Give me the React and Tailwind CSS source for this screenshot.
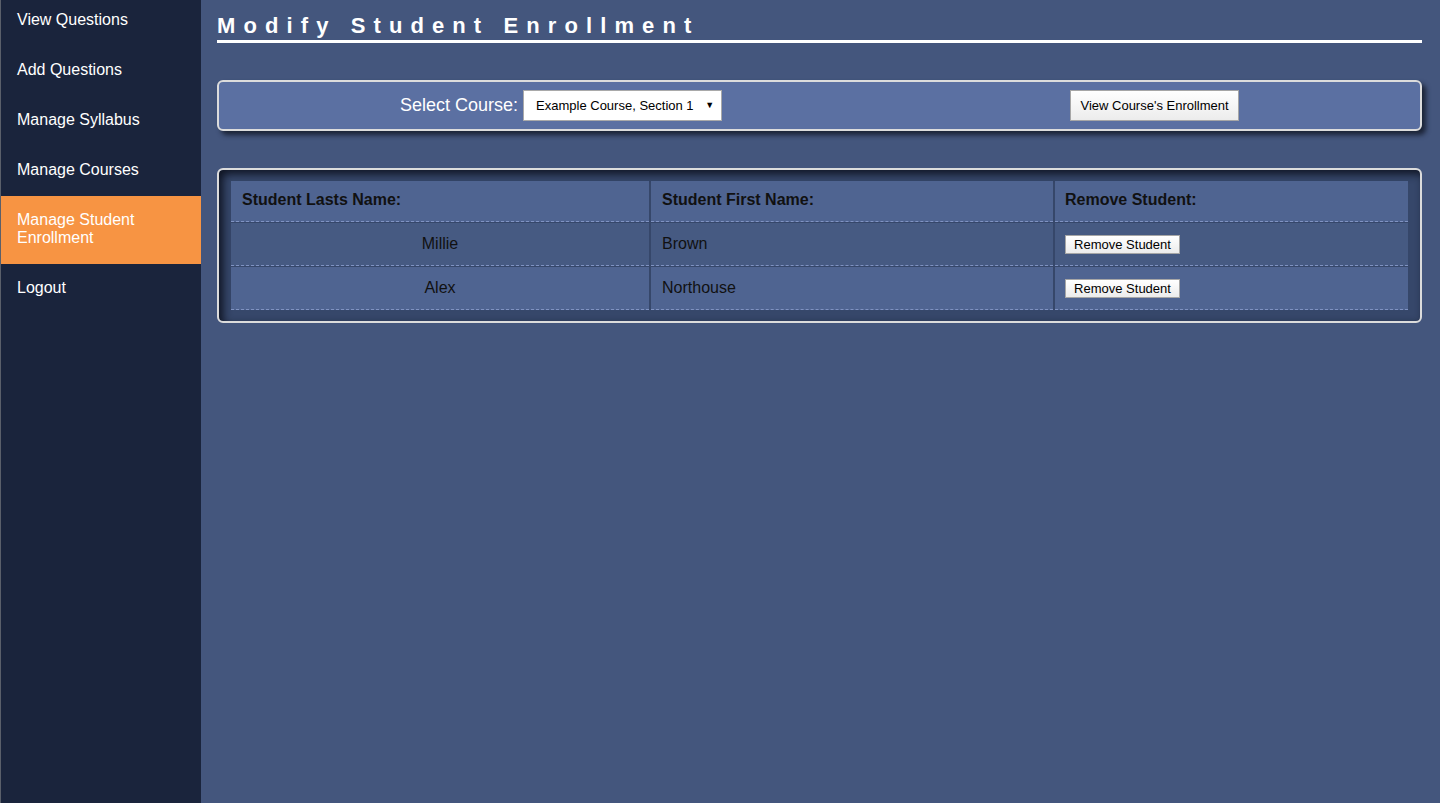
import { useState } from "react";

const navItems = [
  "View Questions",
  "Add Questions",
  "Manage Syllabus",
  "Manage Courses",
  "Manage Student Enrollment",
  "Logout",
];

const students = [
  { last: "Millie", first: "Brown" },
  { last: "Alex", first: "Northouse" },
];

const App = () => {
  const [course, setCourse] = useState("ex1");
  const active = "Manage Student Enrollment";

  return (
    <div className="flex min-h-screen w-full bg-[#44567d] font-['Liberation_Sans',Arial,sans-serif]">
      {/* sidebar */}
      <aside className="w-[201px] shrink-0 bg-[#1a243c] border-l border-[#5a5f6a]">
        <ul className="-mt-[4px]">
          {navItems.map((n) => (
            <li
              key={n}
              className={
                "pl-4 pr-4 pt-[15px] pb-[17px] text-[16px] leading-[18px] text-white cursor-pointer " +
                (n === active ? "bg-[#f79443]" : "")
              }
            >
              {n === "Manage Student Enrollment" ? (
                <>
                  Manage Student
                  <br />
                  Enrollment
                </>
              ) : (
                n
              )}
            </li>
          ))}
        </ul>
      </aside>

      {/* main */}
      <main className="flex-1 pl-4 pr-[18px] pt-[13px]">
        <h1 className="text-[22px] leading-[25px] font-bold tracking-[8.1px] text-white border-b-[3px] border-white pb-[2px]">
          Modify Student Enrollment
        </h1>

        <div className="mt-[37px] flex items-center rounded-[6px] border-2 border-[#dcdcdc] bg-[#5b70a2] py-2 shadow-[4px_4px_5px_#1b2336]">
          <label className="ml-[181px] text-[18px] leading-[21px] text-white">Select Course:</label>
          <div className="relative ml-[5px] w-[199px]">
            <select
              value={course}
              onChange={(e) => setCourse(e.target.value)}
              className="h-[31px] w-full appearance-none border border-[#a9a9a9] bg-white pl-3 pr-6 text-[13px] text-black outline-none"
            >
              <option value="ex1">Example Course, Section 1</option>
            </select>
            <span className="pointer-events-none absolute right-[8px] top-1/2 -translate-y-1/2 text-[9px] text-black">▼</span>
          </div>
          <button className="ml-[348px] h-[31px] w-[169px] border border-[#a6a6a6] bg-gradient-to-b from-white to-[#ececec] text-[13px] text-black">
            View Course's Enrollment
          </button>
        </div>

        <div className="mt-[37px] rounded-[6px] border-2 border-[#dcdcdc] bg-[#36476a] px-[10px] py-[10px] shadow-[inset_4px_4px_8px_#0f1422]">
          <table className="w-full border-separate border-spacing-x-[2px] border-spacing-y-[1px] text-[16px] leading-[18px] text-[#111]">
            <thead>
              <tr className="bg-[#4f6491]">
                <th className="w-[418px] border-b border-dashed border-[#8093c2] pl-[11px] pt-[10px] pb-[12px] text-left font-bold">
                  Student Lasts Name:
                </th>
                <th className="w-[402px] border-b border-dashed border-[#8093c2] pl-[11px] pt-[10px] pb-[12px] text-left font-bold">
                  Student First Name:
                </th>
                <th className="border-b border-dashed border-[#8093c2] pl-[10px] pt-[10px] pb-[12px] text-left font-bold">
                  Remove Student:
                </th>
              </tr>
            </thead>
            <tbody>
              {students.map((s, i) => (
                <tr key={s.last} className={i % 2 === 0 ? "bg-[#465a82]" : "bg-[#4f6491]"}>
                  <td className="border-b border-dashed border-[#8093c2] py-3 text-center align-middle">{s.last}</td>
                  <td className="border-b border-dashed border-[#8093c2] py-3 pl-[11px] align-middle">{s.first}</td>
                  <td className="border-b border-dashed border-[#8093c2] py-[11px] pl-[10px] align-middle">
                    <button className="h-[19px] w-[115px] border border-[#a6a6a6] bg-gradient-to-b from-white to-[#ececec] text-[13px] leading-[15px] text-black">
                      Remove Student
                    </button>
                  </td>
                </tr>
              ))}
            </tbody>
          </table>
        </div>
      </main>
    </div>
  );
};

export default App;
